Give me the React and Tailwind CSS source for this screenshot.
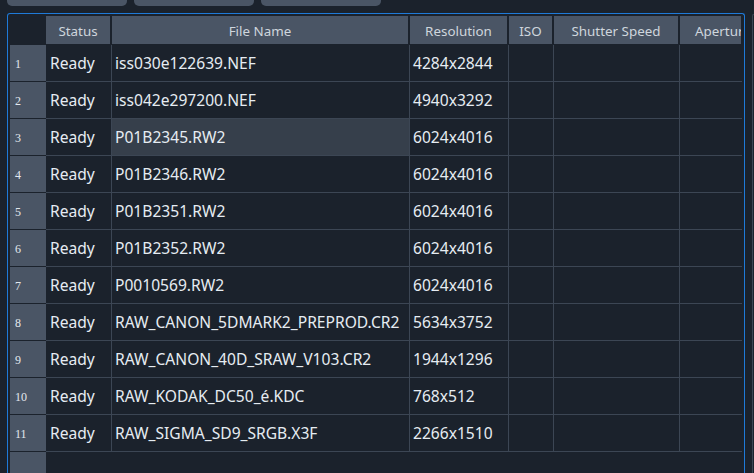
import React from "react";

const rows = [
  ["iss030e122639.NEF", "4284x2844"],
  ["iss042e297200.NEF", "4940x3292"],
  ["P01B2345.RW2", "6024x4016"],
  ["P01B2346.RW2", "6024x4016"],
  ["P01B2351.RW2", "6024x4016"],
  ["P01B2352.RW2", "6024x4016"],
  ["P0010569.RW2", "6024x4016"],
  ["RAW_CANON_5DMARK2_PREPROD.CR2", "5634x3752"],
  ["RAW_CANON_40D_SRAW_V103.CR2", "1944x1296"],
  ["RAW_KODAK_DC50_é.KDC", "768x512"],
  ["RAW_SIGMA_SD9_SRGB.X3F", "2266x1510"],
];

const font = { fontFamily: '"Noto Sans", "Open Sans", sans-serif' };

export default function App() {
  return (
    <div
      className="w-[754px] h-[473px] overflow-hidden bg-[#1b222c] flex flex-col"
      style={font}
    >
      {/* top buttons (mostly scrolled off) */}
      <div className="flex gap-[7px] pl-[7px] h-[6px] shrink-0">
        <div className="w-[120px] h-[6px] bg-[#4a5565] rounded-b-[5px]" />
        <div className="w-[120px] h-[6px] bg-[#4a5565] rounded-b-[5px]" />
        <div className="w-[120px] h-[6px] bg-[#4a5565] rounded-b-[5px]" />
      </div>

      <div className="flex mt-[7px] flex-1 min-h-0">
        {/* table panel */}
        <div className="ml-[7px] w-[738px] border border-b-0 border-[#1f7ad8] rounded-t-[3px] p-[2px] pb-0 overflow-hidden">
          <div className="w-[732px] h-full overflow-hidden flex flex-col">
            {/* header */}
            <div className="flex h-[29px] shrink-0 border-b border-[#1b222c] text-[13.4px] text-[#cfd6dd] leading-none">
              <div className="w-[36px] shrink-0" />
              <div className="w-[66px] shrink-0 bg-[#4a5565] border-r-2 border-[#1b222c] flex items-center justify-center pt-[3px]">Status</div>
              <div className="w-[298px] shrink-0 bg-[#4a5565] border-r-2 border-[#1b222c] flex items-center justify-center pt-[3px]">File Name</div>
              <div className="w-[99px] shrink-0 bg-[#4a5565] border-r-2 border-[#1b222c] flex items-center justify-center pt-[3px]">Resolution</div>
              <div className="w-[45px] shrink-0 bg-[#4a5565] border-r-2 border-[#1b222c] flex items-center justify-center pt-[3px]">ISO</div>
              <div className="w-[126px] shrink-0 bg-[#4a5565] border-r-2 border-[#1b222c] flex items-center justify-center pt-[3px]">Shutter Speed</div>
              <div className="w-[61px] shrink-0 bg-[#4a5565] flex items-center pl-[15px] pt-[3px] whitespace-nowrap overflow-hidden">Aperture</div>
            </div>

            {/* body */}
            <div className="flex flex-1 min-h-0">
              <div className="w-[36px] shrink-0 flex flex-col">
                {rows.map((_, i) => (
                  <div
                    key={i}
                    className="h-[37px] shrink-0 border-b border-[#1b222c] bg-[#4a5565] flex items-center pl-[5px] pt-[2px] text-[12px] text-[#e2e8ee]"
                    style={{ fontFamily: '"Liberation Serif", "DejaVu Serif", serif' }}
                  >
                    {i + 1}
                  </div>
                ))}
                <div className="flex-1 bg-[#4a5565]" />
              </div>
              <div className="flex flex-col w-[696px] shrink-0 text-[15.6px] text-[#e6ecf2]">
                {rows.map(([name, res], i) => (
                  <div key={i} className="flex h-[37px] shrink-0 border-b border-[#3c4654]">
                    <div className="w-[66px] shrink-0 border-r border-[#3c4654] flex items-center pl-[4px] pt-[1px]">Ready</div>
                    <div
                      className={
                        "w-[298px] shrink-0 border-r border-[#3c4654] flex items-center pl-[3px] pt-[1px] whitespace-nowrap overflow-hidden " +
                        (i === 2 ? "bg-[#363f4b]" : "")
                      }
                    >
                      {name}
                    </div>
                    <div className="w-[99px] shrink-0 border-r border-[#3c4654] flex items-center pl-[3px] pt-[1px]">{res}</div>
                    <div className="w-[45px] shrink-0 border-r border-[#3c4654]" />
                    <div className="w-[126px] shrink-0 border-r border-[#3c4654]" />
                    <div className="flex-1" />
                  </div>
                ))}
              </div>
            </div>
          </div>
        </div>
        {/* neighbouring panel edge */}
        <div className="ml-[7px] mt-[1px] flex-1 border-l border-t border-[#3c4654] rounded-tl-[3px]" />
      </div>
    </div>
  );
}
